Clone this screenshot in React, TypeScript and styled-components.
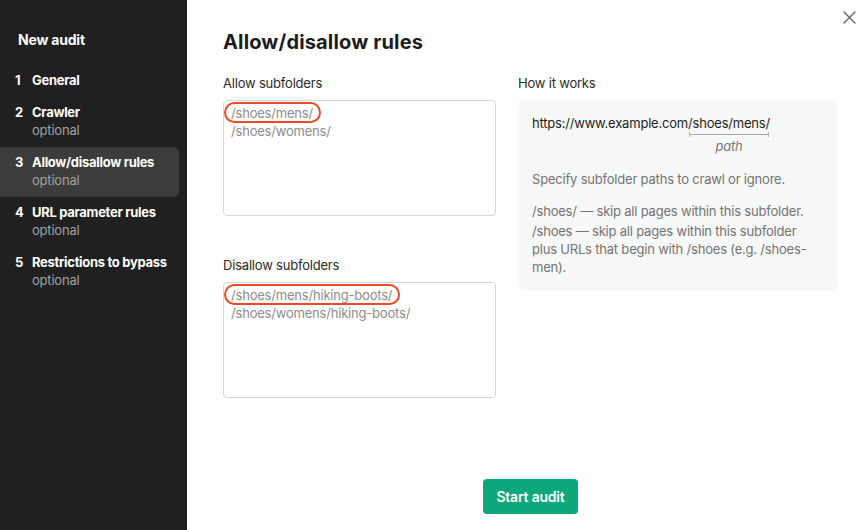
import React from "react";
import styled, { createGlobalStyle } from "styled-components";

const Global = createGlobalStyle`
  html, body { margin: 0; padding: 0; height: 100%; }
  body { font-family: Inter, "Noto Sans", sans-serif; -webkit-font-smoothing: antialiased; letter-spacing: -0.2px; }
  #root { height: 100%; }
  * { box-sizing: border-box; }
`;

const Shell = styled.div`
  display: flex;
  width: 862px;
  height: 530px;
  background: #fff;
  position: relative;
  overflow: hidden;
`;

const Sidebar = styled.nav`
  width: 187px;
  flex: none;
  background: #1f201f;
  color: #fff;
  padding: 30px 8px 0 0;
  display: flex;
  flex-direction: column;
`;

const SideTitle = styled.div`
  font-size: 14px;
  font-weight: 700;
  line-height: 20px;
  padding-left: 18px;
  margin-bottom: 15px;
`;

const Step = styled.div<{ $active?: boolean }>`
  display: flex;
  gap: 8px;
  padding: 6px 4px 8px 15px;
  border-radius: 0 6px 6px 0;
  background: ${(p) => (p.$active ? "#3b3c3b" : "transparent")};
`;

const StepNum = styled.span`
  font-size: 13px;
  font-weight: 700;
  line-height: 18px;
  width: 9px;
`;

const StepText = styled.div`
  display: flex;
  flex-direction: column;
`;

const StepLabel = styled.span`
  font-size: 13px;
  font-weight: 700;
  line-height: 18px;
  color: #fff;
  white-space: nowrap;
  letter-spacing: -0.3px;
`;

const StepSub = styled.span`
  font-size: 13px;
  line-height: 18px;
  color: #a3a3a3;
`;

const Main = styled.main`
  flex: 1;
  padding: 28px 24px 16px 36px;
  display: flex;
  flex-direction: column;
`;

const Title = styled.h1`
  margin: 0;
  font-size: 20px;
  font-weight: 700;
  line-height: 28px;
  color: #1c1c1c;
  letter-spacing: 0.15px;
`;

const Columns = styled.div`
  display: grid;
  grid-template-columns: 273px 320px;
  column-gap: 22px;
  margin-top: 18px;
`;

const Column = styled.div`
  display: flex;
  flex-direction: column;
`;

const Label = styled.div<{ $spaced?: boolean }>`
  font-size: 13px;
  line-height: 18px;
  color: #2b2b2b;
  margin-top: ${(p) => (p.$spaced ? "40px" : "0")};
  margin-bottom: 8px;
`;

const Field = styled.div`
  height: 116px;
  border: 1px solid #d6d6d6;
  border-radius: 4px;
  padding: 3px 7px;
  font-size: 13px;
  line-height: 18px;
  color: #8c8c8c;
`;

const Line = styled.div``;

const Circled = styled.span`
  position: relative;
  &::after {
    content: "";
    position: absolute;
    left: -7px;
    right: -8px;
    top: -3px;
    bottom: -2px;
    border: 2px solid #ec4a25;
    border-radius: 12px;
  }
`;

const InfoBox = styled.div`
  background: #f7f8f8;
  border-radius: 6px;
  padding: 14px 14px 15px 14px;
  font-size: 13px;
  line-height: 18px;
  color: #737373;
`;

const Url = styled.div`
  color: #1f1f1f;
  display: flex;
  align-items: flex-start;
`;

const PathPart = styled.span`
  display: inline-flex;
  flex-direction: column;
  align-items: stretch;
`;

const Bracket = styled.span`
  height: 5px;
  margin: 0 1px;
  border-left: 1px solid #b0b0b0;
  border-right: 1px solid #b0b0b0;
  background: linear-gradient(#a6a6a6, #a6a6a6) center / 100% 1px no-repeat;
`;

const PathLabel = styled.span`
  font-style: italic;
  color: #7a7a7a;
  text-align: center;
  line-height: 18px;
`;

const Para = styled.p<{ $gap: number }>`
  margin: ${(p) => p.$gap}px 0 0 0;
`;

const Footer = styled.div`
  margin-top: auto;
  display: flex;
  justify-content: center;
`;

const StartButton = styled.button`
  height: 35px;
  padding: 0 13px;
  border: none;
  border-radius: 4px;
  background: #0ca77b;
  color: #fff;
  font-family: inherit;
  font-size: 14px;
  font-weight: 600;
  letter-spacing: -0.2px;
  cursor: pointer;
`;

const Close = styled.button`
  position: absolute;
  top: 9px;
  right: 5px;
  width: 16px;
  height: 16px;
  padding: 0;
  border: none;
  background: none;
  display: flex;
  align-items: center;
  justify-content: center;
  cursor: pointer;
`;

const steps = [
  { n: 1, label: "General" },
  { n: 2, label: "Crawler", sub: "optional" },
  { n: 3, label: "Allow/disallow rules", sub: "optional", active: true },
  { n: 4, label: "URL parameter rules", sub: "optional" },
  { n: 5, label: "Restrictions to bypass", sub: "optional" },
];

export default function App() {
  return (
    <>
      <Global />
      <Shell>
        <Sidebar>
          <SideTitle>New audit</SideTitle>
          {steps.map((s) => (
            <Step key={s.n} $active={s.active}>
              <StepNum>{s.n}</StepNum>
              <StepText>
                <StepLabel>{s.label}</StepLabel>
                {s.sub && <StepSub>{s.sub}</StepSub>}
              </StepText>
            </Step>
          ))}
        </Sidebar>
        <Main>
          <Title>Allow/disallow rules</Title>
          <Columns>
            <Column>
              <Label>Allow subfolders</Label>
              <Field>
                <Line>
                  <Circled>/shoes/mens/</Circled>
                </Line>
                <Line>/shoes/womens/</Line>
              </Field>
              <Label $spaced>Disallow subfolders</Label>
              <Field>
                <Line>
                  <Circled>/shoes/mens/hiking-boots/</Circled>
                </Line>
                <Line>/shoes/womens/hiking-boots/</Line>
              </Field>
            </Column>
            <Column>
              <Label>How it works</Label>
              <InfoBox>
                <Url>
                  <span>https://www.example.com</span>
                  <PathPart>
                    <span>/shoes/mens/</span>
                    <Bracket />
                    <PathLabel>path</PathLabel>
                  </PathPart>
                </Url>
                <Para $gap={15}>Specify subfolder paths to crawl or ignore.</Para>
                <Para $gap={14}>/shoes/ — skip all pages within this subfolder.</Para>
                <Para $gap={2}>
                  /shoes — skip all pages within this subfolder
                  <br />
                  plus URLs that begin with /shoes (e.g. /shoes-
                  <br />
                  men).
                </Para>
              </InfoBox>
            </Column>
          </Columns>
          <Footer>
            <StartButton>Start audit</StartButton>
          </Footer>
        </Main>
        <Close aria-label="Close">
          <svg width="13" height="13" viewBox="0 0 13 13">
            <path d="M1 1 L12 12 M12 1 L1 12" stroke="#6e6e6e" strokeWidth="1.5" strokeLinecap="round" />
          </svg>
        </Close>
      </Shell>
    </>
  );
}
